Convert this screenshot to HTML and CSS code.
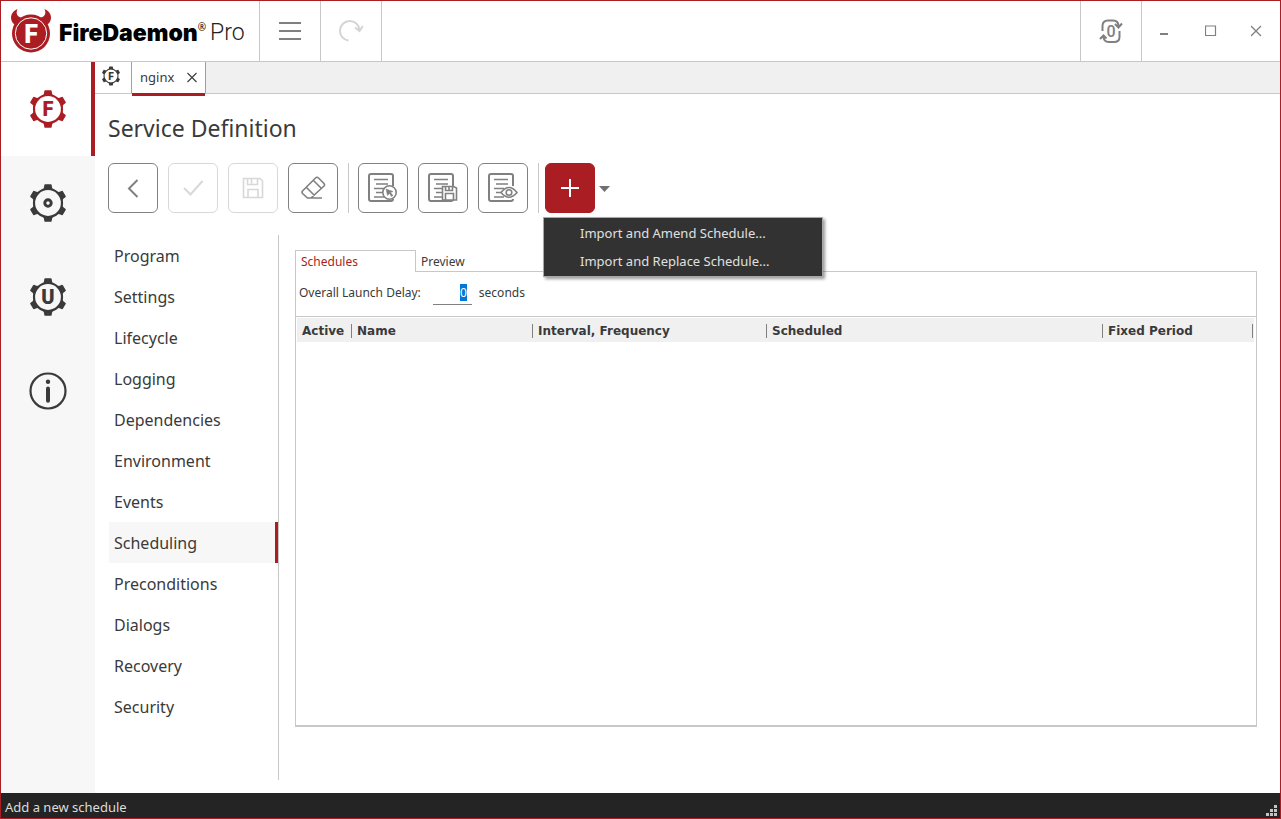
FILE: index.html
```html
<!DOCTYPE html>
<html lang="en">
<head>
<meta charset="utf-8">
<title>FireDaemon Pro</title>
<link rel="stylesheet" href="styles.css">
</head>
<body>
<svg class="defs" aria-hidden="true">
  <symbol id="gear" viewBox="-20 -20 40 40">
    <circle r="14" fill="none" stroke="currentColor" stroke-width="2.200"/>
    <g fill="currentColor">
      <path id="tooth" d="M-5-13.500Q-3.900-15-3.600-18.300Q-3.500-18.800-2.800-18.800H2.800Q3.500-18.800 3.600-18.300Q3.900-15 5-13.500Z"/>
      <use href="#tooth" transform="rotate(60)"/>
      <use href="#tooth" transform="rotate(120)"/>
      <use href="#tooth" transform="rotate(180)"/>
      <use href="#tooth" transform="rotate(240)"/>
      <use href="#tooth" transform="rotate(300)"/>
    </g>
  </symbol>
  <symbol id="page" viewBox="0 0 30 30">
    <path d="M25 13V3q0-2-2-2H3Q1 1 1 3V26q0 2 2 2H23q2 0 2-2" stroke-width="2"/>
    <path d="M6 6.500H20M8 11H20M6 15.500H16M8 19.500H15M6 24H16"/>
  </symbol>
</svg>
<div class="window">
  <header class="topbar">
    <div class="brand">
      <svg class="brand-mark" viewBox="0 0 44 46" aria-hidden="true">
        <path d="M8.500 1C3 3 0 9 3.500 14.500L7 18L17 9.500C11 11 5.500 7.500 8.500 1ZM35.500 1C41 3 44 9 40.500 14.500L37 18L27 9.500C33 11 38.500 7.500 35.500 1Z" fill="#aa1e23"/>
        <circle cx="22" cy="25.500" r="19" fill="#aa1e23"/>
        <circle cx="22" cy="25.500" r="15.700" fill="none" stroke="#fff" stroke-width="1"/>
        <text x="22" y="34.500" text-anchor="middle" class="mark-letter">F</text>
      </svg>
      <span class="brand-name">FireDaemon</span><span class="brand-reg">®</span><span class="brand-pro">Pro</span>
    </div>
    <button class="top-btn" aria-label="Menu"><svg width="24" height="24" viewBox="0 0 24 24"><path d="M1 4H23M1 12H23M1 20H23" class="thick"/></svg></button>
    <button class="top-btn faint" aria-label="Refresh" disabled><svg width="26" height="26" viewBox="0 0 26 26"><path d="M10.500 22.500A9.800 9.800 0 1 1 21.500 12M17 9.500L21.500 13L24.800 8" class="thick"/></svg></button>
    <div class="spacer"></div>
    <button class="top-btn right" aria-label="Restart counter"><svg width="26" height="26" viewBox="0 0 26 26"><path d="M4.500 13V8q0-5.500 5.500-5.500H15q5.500 0 5.500 5.500M17 6L20.500 9.500L24 5.500M21.500 13V19q0 5-5.500 5H11q-5.500 0-5.500-5.500M2 21L5.500 17.500L8.500 20.500" class="thick"/><text x="13" y="19" text-anchor="middle" class="zero">0</text></svg></button>
    <div class="win-btns">
      <button aria-label="Minimize"><svg width="12" height="12" viewBox="0 0 12 12"><path d="M1 9H9" stroke-width="2"/></svg></button>
      <button aria-label="Maximize"><svg width="12" height="12" viewBox="0 0 12 12"><path d="M0 1H11M.5 1V11M10.500 1V11M0 10.500H11" stroke-width="1.200"/></svg></button>
      <button aria-label="Close"><svg width="12" height="12" viewBox="0 0 12 12"><path d="M0 1L10 11M10 1L0 11" stroke-width="1.300"/></svg></button>
    </div>
  </header>
  <div class="body">
    <nav class="rail" aria-label="Sections">
      <button class="rail-btn active" aria-label="FireDaemon services"><svg width="40" height="40" viewBox="-20 -20 40 40"><use href="#gear" x="-20" y="-20" width="40" height="40"/><text y="7" text-anchor="middle" class="gear-letter">F</text></svg></button>
      <button class="rail-btn" aria-label="Windows services"><svg width="40" height="40" viewBox="-20 -20 40 40"><use href="#gear" x="-20" y="-20" width="40" height="40"/><circle r="3.200" fill="none" stroke="currentColor" stroke-width="3"/></svg></button>
      <button class="rail-btn" aria-label="User services"><svg width="40" height="40" viewBox="-20 -20 40 40"><use href="#gear" x="-20" y="-20" width="40" height="40"/><text y="7" text-anchor="middle" class="gear-letter">U</text></svg></button>
      <button class="rail-btn" aria-label="About"><svg width="40" height="40" viewBox="-20 -20 40 40"><circle r="17.500" fill="none" stroke="currentColor" stroke-width="2.200"/><circle cy="-9.300" r="2.200" fill="currentColor"/><path d="M0-2.500V9.800" stroke="currentColor" stroke-width="4" stroke-linecap="round"/></svg></button>
    </nav>
    <main class="main">
      <div class="tabs">
        <button class="tab home" aria-label="Services"><svg width="20" height="20" viewBox="-20 -20 40 40"><use href="#gear" x="-20" y="-20" width="40" height="40"/><text y="7" text-anchor="middle" class="gear-letter">F</text></svg></button>
        <div class="tab open"><span>nginx</span><button class="tab-close" aria-label="Close tab"><svg width="11" height="11" viewBox="0 0 11 11"><path d="M.5 1L9.500 10M9.500 1L.5 10"/></svg></button></div>
      </div>
      <div class="page">
        <h1>Service Definition</h1>
        <div class="tools">
          <button class="tool" aria-label="Back"><svg width="20" height="20" viewBox="0 0 20 20"><path d="M14.500 2L6 10.500L14.500 19" class="thick"/></svg></button>
          <button class="tool off" aria-label="Apply" disabled><svg width="22" height="22" viewBox="0 0 22 22"><path d="M2 11L8.500 17.500L20.500 4" class="thick"/></svg></button>
          <button class="tool off" aria-label="Save" disabled><svg width="22" height="22" viewBox="0 0 22 22"><path d="M1.500 1.500H18L20.500 4V20.500H1.500ZM5.500 2V7.500H15.500V2M9.500 2V6.500M6 20V12.500H16V20"/></svg></button>
          <button class="tool" aria-label="Erase"><svg width="26" height="26" viewBox="0 0 26 26"><path d="M2.500 16L15.500 3Q17 1.500 18.500 3L24 8.500Q25 10 24 11L11 23H7.500L2.500 18.500Q1.500 17 2.500 16ZM6.500 12.500L14.500 20.500M13.500 5.500L21.500 13.500M7 23H22"/></svg></button>
          <span class="divider"></span>
          <button class="tool" aria-label="Select template"><svg width="30" height="30" viewBox="0 0 30 30"><use href="#page"/><circle cx="21.500" cy="19.500" r="6.700" fill="#fff"/><path d="M18 16L25 18.500L22.500 19.500L25 22.500L23.500 23.500L21.500 20.500L19.500 22.500Z" fill="currentColor" stroke-width=".5"/></svg></button>
          <button class="tool" aria-label="Save template"><svg width="30" height="30" viewBox="0 0 30 30"><use href="#page"/><path d="M14.500 13.500H25.500L28.500 15V27H14.500Z" fill="#fff"/><path d="M17.500 14V17.500H24.500V14M21 14V17M17.500 27V20.500H25.500V27"/></svg></button>
          <button class="tool" aria-label="View template"><svg width="30" height="30" viewBox="0 0 30 30"><use href="#page"/><path d="M13 19.500Q21 9.500 29 19.500Q21 29 13 19.500Z" fill="#fff"/><circle cx="21" cy="19.500" r="2.800"/></svg></button>
          <span class="divider"></span>
          <div class="split">
            <button class="tool add" aria-label="Add"><svg width="20" height="20" viewBox="0 0 20 20"><path d="M10 1V19M1 10H19" stroke-width="2"/></svg></button>
            <button class="caret" aria-label="More add actions"><svg width="12" height="8" viewBox="0 0 12 8"><path d="M0 2H11L5.500 8Z" fill="#707070" stroke="none"/></svg></button>
            <div class="menu" role="menu">
              <button role="menuitem">Import and Amend Schedule...</button>
              <button role="menuitem">Import and Replace Schedule...</button>
            </div>
          </div>
        </div>
        <div class="columns">
          <nav class="side">
            <a href="#program">Program</a>
            <a href="#settings">Settings</a>
            <a href="#lifecycle">Lifecycle</a>
            <a href="#logging">Logging</a>
            <a href="#dependencies">Dependencies</a>
            <a href="#environment">Environment</a>
            <a href="#events">Events</a>
            <a href="#scheduling" class="current">Scheduling</a>
            <a href="#preconditions">Preconditions</a>
            <a href="#dialogs">Dialogs</a>
            <a href="#recovery">Recovery</a>
            <a href="#security">Security</a>
          </nav>
          <section class="panel">
            <div class="panel-tabs">
              <button class="panel-tab selected">Schedules</button>
              <button class="panel-tab">Preview</button>
            </div>
            <div class="panel-body">
              <div class="delay">
                <label for="delay">Overall Launch Delay:</label>
                <input id="delay" type="text" value="0">
                <span>seconds</span>
              </div>
              <div class="grid-wrap">
                <table>
                  <colgroup><col class="c-active"><col class="c-name"><col class="c-interval"><col><col class="c-period"></colgroup>
                  <thead><tr><th><span>Active</span></th><th><span>Name</span></th><th><span>Interval, Frequency</span></th><th><span>Scheduled</span></th><th><span>Fixed Period</span></th></tr></thead>
                </table>
              </div>
            </div>
          </section>
        </div>
      </div>
    </main>
  </div>
  <footer class="status"><span>Add a new schedule</span>
    <svg width="11" height="11" viewBox="0 0 11 11" aria-hidden="true"><path d="M8 0h3v3h-3zM4 4h3v3h-3zM8 4h3v3h-3zM0 8h3v3h-3zM4 8h3v3h-3zM8 8h3v3h-3z" fill="#c4c4c4"/></svg>
  </footer>
</div>
<script src="main.js"></script>
</body>
</html>
```
FILE: main.js
```js
const delay = document.getElementById("delay");
delay.focus();
delay.select();
```
FILE: styles.css
```css
* { box-sizing: border-box; }
body { margin: 0; font: 13px/20px "Noto Sans", sans-serif; color: #3a3a3a; background: #fff; }
button { font: inherit; color: inherit; background: none; border: 0; padding: 0; margin: 0; }
svg { display: block; fill: none; stroke: currentColor; stroke-width: 1.6; }
svg text { fill: currentColor; stroke: none; }
.defs { position: absolute; width: 0; height: 0; }
.thick { stroke-width: 2; }

.window { min-height: 100vh; display: flex; flex-direction: column; border: 1px solid #aa1e23; }
.topbar { display: flex; height: 61px; border-bottom: 1px solid #c8c8c8; color: #808080; }
.brand { width: 259px; display: flex; align-items: center; padding-left: 8px; border-right: 1px solid #c8c8c8; }
.brand-mark { width: 44px; height: 46px; stroke: none; flex: none; }
.brand-mark .mark-letter { font: 900 25px Roboto, sans-serif; fill: #fff; }
.brand-name { margin-left: 6px; padding-top: 4px; font: 900 23px/30px Inter, sans-serif; color: #000; }
.brand-reg { align-self: flex-start; margin-top: 18px; font-size: 10px; line-height: 16px; color: #000; }
.brand-pro { margin-left: 4px; padding-top: 4px; font: 300 23px/30px Roboto, sans-serif; color: #222; }
.top-btn { width: 61px; display: grid; place-items: center; border-right: 1px solid #c8c8c8; }
.top-btn.right { width: 62px; border-left: 1px solid #c8c8c8; }
.top-btn.faint { color: #d4d4d4; }
.zero { font: 500 16px Roboto, sans-serif; }
.spacer { flex: 1; }
.win-btns { display: flex; }
.win-btns button { width: 46px; display: grid; place-items: center; }

.body { flex: 1; display: flex; }
.rail { width: 94px; flex: none; background: #f7f7f7; }
.rail-btn { width: 100%; height: 94px; display: grid; place-items: center; color: #3a3a3a; }
.rail-btn.active { background: #fff; color: #aa1e23; border-right: 4px solid #aa1e23; padding-left: 4px; }
.rail-btn svg, .home svg { stroke-width: 0; }
.gear-letter { font: 900 20px Roboto, sans-serif; }

.main { flex: 1; min-width: 0; display: flex; flex-direction: column; }
.tabs { display: flex; height: 32px; background: #f0f0f0; border-bottom: 1px solid #c8c8c8; }
.tab { background: #fff; border-right: 1px solid #a0a0a0; }
.home { width: 37px; display: grid; place-items: center; padding: 0 4px 4px 0; }
.open { position: relative; width: 74px; display: flex; align-items: center; justify-content: space-between; padding: 0 7px 1px 8px; }
.open::after { content: ""; position: absolute; left: 0; right: 0; bottom: -3px; height: 3px; background: #aa1e23; }
.tab-close svg { stroke-width: 1.1; }

.page { flex: 1; display: flex; flex-direction: column; padding: 19px 23px 13px 13px; }
h1 { margin: 0 0 20px; font-size: 23px; font-weight: 400; line-height: 30px; }
.tools { display: flex; gap: 10px; height: 50px; }
.tool { width: 50px; height: 50px; display: grid; place-items: center; border: 1px solid #808080; border-radius: 6px; color: #808080; }
.tool.off { border-color: #d8d8d8; color: #d8d8d8; }
.tool.add { background: #aa1e23; border-color: #aa1e23; color: #fff; }
.divider { width: 1px; background: #c8c8c8; margin-right: -1px; }
.split { position: relative; display: flex; margin-left: -3px; }
.caret { width: 20px; display: grid; place-items: center; }
.menu { position: absolute; z-index: 2; top: 54px; left: -2px; width: 280px; padding: 1px 0; background: #323232; border: 1px solid #a8a8a8; box-shadow: 2px 2px 3px rgba(0, 0, 0, .4); color: #e0e0e0; }
.menu button { display: block; width: 100%; height: 28px; padding-left: 36px; text-align: left; white-space: nowrap; }

.columns { flex: 1; display: flex; margin-top: 22px; }
.side { width: 171px; flex: none; border-right: 1px solid #c8c8c8; }
.side a { display: block; height: 41px; line-height: 43px; margin: 0 0 0 1px; padding-left: 5px; font-size: 16px; color: inherit; text-decoration: none; }
.side .current { background: #f7f7f7; border-right: 3px solid #aa1e23; }

.panel { flex: 1; min-width: 0; display: flex; flex-direction: column; padding: 15px 0 53px; margin-left: 16px; font-size: 12px; }
.panel-tabs { display: flex; height: 21px; }
.panel-tab { padding: 2px 5px 0; text-align: left; line-height: 20px; }
.panel-tab.selected { padding-top: 0; width: 121px; height: 22px; border: 1px solid #c8c8c8; border-bottom: 0; background: #fff; color: #aa1e23; z-index: 1; }
.panel-body { flex: 1; display: flex; flex-direction: column; border: 1px solid #c8c8c8; border-bottom-width: 2px; }
.delay { display: flex; align-items: center; height: 44px; padding: 0 3px 2px; }
.delay input { width: 39px; height: 23px; margin: 0 7px 0 12px; padding: 0 5px 1px 0; border: 0; border-bottom: 1px solid #808080; outline: 0; background: none; font: 12px "Noto Sans", sans-serif; text-align: right; color: inherit; }
.delay input::selection { background: #0078d7; color: #fff; }
.grid-wrap { flex: 1; padding: 1px 2px 0 1px; border-top: 1px solid #c8c8c8; }
table { width: 100%; table-layout: fixed; border-collapse: collapse; }
.c-active { width: 55px; }
.c-name { width: 181px; }
.c-interval { width: 234px; }
.c-period { width: 151px; }
th { height: 24px; padding: 1px 0 0; background: #f0f0f0; text-align: left; font: bold 12px/14px "DejaVu Sans", sans-serif; white-space: nowrap; }
th span { display: block; padding-left: 5px; border-right: 1px solid #808080; }
th:last-child span { margin-right: 1px; }

.status { display: flex; justify-content: space-between; height: 25px; padding: 0 3px 0 4px; background: #242424; color: #dcdcdc; line-height: 28px; }
.status svg { align-self: flex-end; margin-bottom: 2px; stroke: none; }
```
